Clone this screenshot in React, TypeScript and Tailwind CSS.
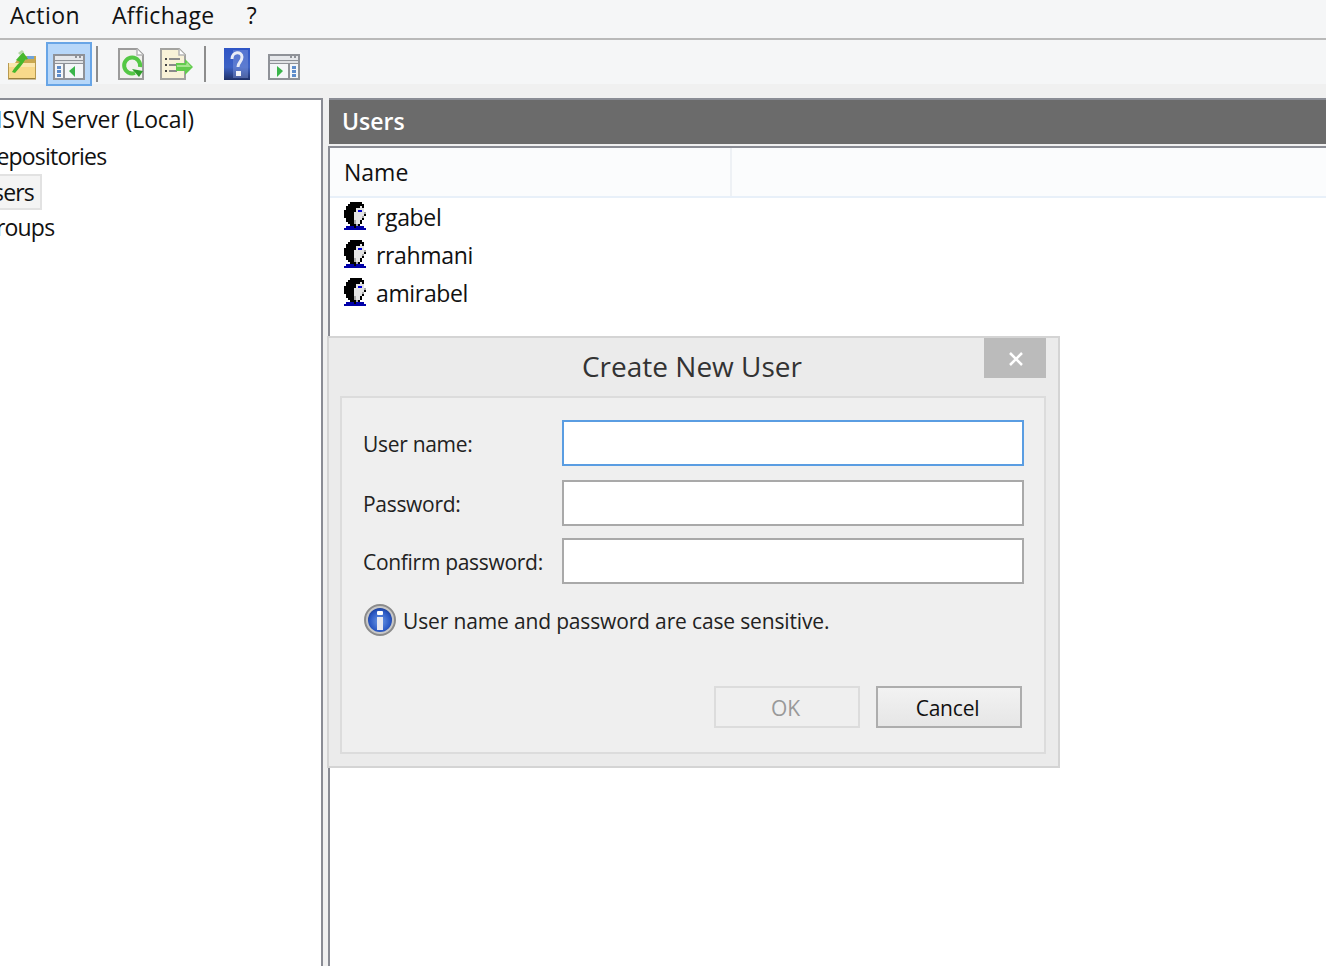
import React from "react";

const font = "font-['Open_Sans','Noto_Sans',sans-serif]";

function Folder() {
  return (
    <svg width="30" height="30" viewBox="0 0 30 30" className="shrink-0">
      <path d="M1 13h7l2-3h9V6h10v7z" fill="#c9a84f" />
      <rect x="20" y="6" width="7" height="3" fill="#6fa3d8" />
      <rect x="1" y="13" width="28" height="16" fill="#f8d98b" />
      <path d="M1 13h28v4H1z" fill="#fbe7ae" />
      <path d="M1 28h28v1.500H1z" fill="#9a7f3c" />
      <path d="M1.500 13v16M28.500 10v19" stroke="#b89a50" strokeWidth="1" />
      <path d="M5 22c2-4 5-7 8-10l-4-2 7-8 5 7-3 1c-2 4-6 8-10 13z" fill="#46b82c" />
      <path d="M11 3l4-3 2 2-4 3z" fill="#b5d8a8" />
    </svg>
  );
}

function WinIcon({ flip }: { flip?: boolean }) {
  return (
    <svg width="32" height="26" viewBox="0 0 32 26" className="shrink-0" shapeRendering="crispEdges">
      <rect x="0" y="0" width="32" height="26" fill="#8f9298" />
      <rect x="2" y="2" width="28" height="4" fill="#e6e8eb" />
      <rect x="2" y="7" width="28" height="2" fill="#dfe1e4" />
      <rect x="22" y="2" width="2" height="2" fill="#8f9298" />
      <rect x="26" y="2" width="2" height="2" fill="#8f9298" />
      <rect x="2" y="10" width="28" height="14" fill="#f4f6f8" />
      {flip ? (
        <>
          <rect x="20" y="10" width="2" height="14" fill="#8f9298" />
          <path d="M9 12l6 5-6 6z" fill="#39b54a" shapeRendering="auto" />
          <rect x="24" y="12" width="4" height="3" fill="#5d8ccb" />
          <rect x="24" y="16" width="4" height="3" fill="#5d8ccb" />
          <rect x="24" y="20" width="4" height="3" fill="#5d8ccb" />
        </>
      ) : (
        <>
          <rect x="10" y="10" width="2" height="14" fill="#8f9298" />
          <path d="M22 12l-6 5 6 6z" fill="#39b54a" shapeRendering="auto" />
          <rect x="4" y="12" width="4" height="3" fill="#5d8ccb" />
          <rect x="4" y="16" width="4" height="3" fill="#5d8ccb" />
          <rect x="4" y="20" width="4" height="3" fill="#5d8ccb" />
        </>
      )}
    </svg>
  );
}

function RefreshDoc() {
  return (
    <svg width="26" height="32" viewBox="0 0 26 32" className="shrink-0">
      <path d="M1 1h18l6 6v24H1z" fill="#f2f2ee" stroke="#9b9b9b" strokeWidth="2" />
      <path d="M19 1v6h6" fill="#fff" stroke="#b5b5b5" strokeWidth="1.500" />
      <path d="M17 25a8 8 0 1 1 5-6" fill="none" stroke="#55c845" strokeWidth="4" />
      <path d="M14 21l11 2-4 6z" fill="#2f9e2a" />
    </svg>
  );
}

function ExportDoc() {
  return (
    <svg width="34" height="32" viewBox="0 0 34 32" className="shrink-0">
      <path d="M1 1h18l6 6v24H1z" fill="#f8f2d8" stroke="#a3a3a0" strokeWidth="2" />
      <path d="M19 1v6h6" fill="#fff" stroke="#b5b5b5" strokeWidth="1.500" />
      <rect x="5" y="10" width="2" height="2" fill="#444" />
      <rect x="9" y="10" width="11" height="2" fill="#8b8b8b" />
      <rect x="5" y="16" width="2" height="2" fill="#444" />
      <rect x="9" y="16" width="8" height="2" fill="#8b8b8b" />
      <rect x="5" y="22" width="2" height="2" fill="#444" />
      <rect x="9" y="22" width="8" height="2" fill="#8b8b8b" />
      <path d="M16 15h9v-4l8 8-8 8v-4h-9z" fill="#62cc4e" />
      <path d="M17 17h9l1-3 4 5H17z" fill="#a5e48f" />
    </svg>
  );
}

function HelpIcon() {
  return (
    <svg width="26" height="32" viewBox="0 0 26 32" className="shrink-0">
      <defs>
        <linearGradient id="hg" x1="0" y1="0" x2="0" y2="1">
          <stop offset="0" stopColor="#2f55c6" />
          <stop offset="0.6" stopColor="#3d62c4" />
          <stop offset="1" stopColor="#1f3169" />
        </linearGradient>
      </defs>
      <rect width="26" height="32" fill="url(#hg)" />
      <rect x="9" y="2" width="15" height="28" fill="#8ba3e4" opacity="0.4" />
      <path d="M8 11c0-8 10-8 10-2 0 5-4 5-4 10" fill="none" stroke="#e9ecf6" strokeWidth="3" />
      <rect x="12" y="23" width="5" height="5" fill="#f2f3f8" />
    </svg>
  );
}

const userRows = [
  "...######..",
  "..########.",
  ".#######w#.",
  ".#####wwww.",
  "######wbbw.",
  "#####wwwwwg",
  "#####wwwww#",
  "#####wwwwg.",
  ".####wwww#.",
  ".####gww#..",
  "..###gww#..",
  "...###g#...",
  ".BBBB#BBBB.",
  "BBBBBBBBBBB",
];
const userColors: Record<string, string> = { "#": "#000", w: "#e4e4e4", g: "#a8a8a8", b: "#0000d8", B: "#0000a8" };

function UserIcon() {
  return (
    <svg width="22" height="28" viewBox="0 0 11 14" className="mb-[2px] shrink-0" shapeRendering="crispEdges">
      {userRows.flatMap((row, y) =>
        row.split("").map((c, x) => (c === "." ? null : <rect key={`${x}-${y}`} x={x} y={y} width="1" height="1" fill={userColors[c]} />))
      )}
    </svg>
  );
}

function InfoIcon() {
  return (
    <svg width="32" height="32" viewBox="0 0 32 32" className="shrink-0">
      <defs>
        <radialGradient id="ig" cx="0.5" cy="0.55" r="0.6">
          <stop offset="0" stopColor="#6f9be8" />
          <stop offset="0.7" stopColor="#2b58c4" />
          <stop offset="1" stopColor="#18388e" />
        </radialGradient>
      </defs>
      <circle cx="16" cy="16" r="15" fill="#c8c8c8" stroke="#8b8b8b" strokeWidth="2" />
      <circle cx="16" cy="16" r="12" fill="url(#ig)" />
      <rect x="13" y="7" width="6" height="4" rx="1" fill="#fff" />
      <rect x="13" y="13" width="6" height="13" fill="#e8e8f0" />
    </svg>
  );
}

function Field({ label, active, mb }: { label: string; active?: boolean; mb: string }) {
  return (
    <div className={`flex items-center ${mb}`}>
      <span className="w-[199px] pt-[2px] text-[21px] leading-[30px] tracking-[-0.3px] text-[#222]">{label}</span>
      <div className={`h-[46px] w-[462px] border-2 bg-white ${active ? "border-[#5a9de2]" : "border-[#a9a9a9]"}`} />
    </div>
  );
}

const users = ["rgabel", "rrahmani", "amirabel"];

export default function App() {
  return (
    <div className={`relative flex h-[966px] w-[1326px] flex-col overflow-hidden bg-[#f0f0f0] text-[#111] ${font}`}>
      <div className="flex h-[40px] shrink-0 items-start gap-[32px] border-b-2 border-[#b9b9b9] bg-[#f5f6f7] pl-[10px] text-[23px] leading-[30px] tracking-[0.4px]">
        <span>Action</span>
        <span>Affichage</span>
        <span>?</span>
      </div>
      <div className="flex h-[44px] shrink-0 items-end bg-[#f5f6f7] pl-[7px]">
        <div className="mb-[4px]"><Folder /></div>
        <div className="mb-[-2px] ml-[9px] flex h-[44px] w-[46px] items-end justify-center border-2 border-[#68a5e6] bg-[#b7d7f9] pb-[4px]"><WinIcon /></div>
        <div className="mb-[2px] ml-[4px] h-[36px] w-[2px] bg-[#8d8d8d]" />
        <div className="mb-[4px] ml-[20px]"><RefreshDoc /></div>
        <div className="mb-[4px] ml-[16px]"><ExportDoc /></div>
        <div className="mb-[2px] ml-[10px] h-[36px] w-[2px] bg-[#8d8d8d]" />
        <div className="mb-[4px] ml-[18px]"><HelpIcon /></div>
        <div className="mb-[4px] ml-[18px]"><WinIcon flip /></div>
      </div>
      <div className="flex min-h-0 flex-1 pt-[14px]">
        <div className="h-full w-[323px] shrink-0 overflow-hidden border-r-2 border-t-2 border-[#8a8c94] bg-white text-[23px] leading-[36px]">
          <div className="mt-[1px] whitespace-nowrap">
            <div className="ml-[-4px] h-[37px] tracking-[-0.1px]">ISVN Server (Local)</div>
            <div className="ml-[-17px] tracking-[-0.8px]">Repositories</div>
            <div className="ml-[-25px] h-[36px] tracking-[-0.8px]">
              <span className="inline-block h-[36px] border-2 border-[#e2e2e2] bg-[#f4f4f4] pr-[6px] leading-[32px]">Users</span>
            </div>
            <div className="ml-[-20px] mt-[-1px] tracking-[-0.8px]">Groups</div>
          </div>
        </div>
        <div className="ml-[5px] flex min-w-0 flex-1 flex-col">
          <div className="ml-[1px] flex h-[46px] shrink-0 items-center border-t-2 border-[#8a8c94] bg-[#6b6b6b] pb-[2px] pl-[13px] text-[23px] font-semibold text-white">Users</div>
          <div className="mt-[2px] flex flex-1 flex-col border-l-2 border-t-2 border-[#8a8c94] bg-white">
            <div className="flex h-[50px] shrink-0 border-b-2 border-[#e8f0f9] bg-[#fbfcfd]">
              <div className="flex w-[402px] items-center border-r-2 border-[#eef1f5] pl-[14px] pt-[1px] text-[23px]">Name</div>
            </div>
            <div className="flex flex-col pl-[14px]">
              {users.map((u) => (
                <div key={u} className="flex h-[38px] items-center gap-[10px] text-[23px] tracking-[-0.35px]">
                  <UserIcon />
                  <span>{u}</span>
                </div>
              ))}
            </div>
          </div>
        </div>
      </div>

      <div className="absolute left-[327px] top-[336px] flex h-[432px] w-[733px] flex-col border-2 border-[#d4d4d4] bg-[#ebebeb]">
        <div className="relative h-[58px] shrink-0 pr-[3px] pt-[9px] text-center text-[28px] leading-[38px] text-[#333]">
          Create New User
          <div className="absolute right-[12px] top-0 flex h-[40px] w-[62px] items-center justify-center bg-[#bbbbbb]">
            <svg width="16" height="14" viewBox="0 0 16 14" className="ml-[2px] mt-[2px]">
              <path d="M2 1l12 12M14 1L2 13" stroke="#fff" strokeWidth="2.500" />
            </svg>
          </div>
        </div>
        <div className="ml-[11px] mr-[12px] flex h-[358px] flex-col border-2 border-[#dcdcdc] bg-[#efefef] pl-[21px] pt-[22px]">
          <Field label="User name:" active mb="mb-[14px]" />
          <Field label="Password:" mb="mb-[12px]" />
          <Field label="Confirm password:" mb="mb-[19px]" />
          <div className="ml-[1px] flex items-center gap-[7px] text-[21px] leading-[32px] tracking-[-0.15px] text-[#222]">
            <InfoIcon />
            <span className="pt-[2px]">User name and password are case sensitive.</span>
          </div>
          <div className="mr-[22px] mt-[49px] flex justify-end gap-[16px] text-[21px] tracking-[-0.2px]">
            <div className="flex h-[42px] w-[146px] items-center justify-center border-2 border-[#dcdcdc] pr-[3px] pt-[4px] text-[#999]">OK</div>
            <div className="flex h-[42px] w-[146px] items-center justify-center border-2 border-[#adadad] bg-gradient-to-b from-[#f2f2f2] to-[#e6e6e6] pr-[3px] pt-[4px] text-[#111]">Cancel</div>
          </div>
        </div>
      </div>
    </div>
  );
}
